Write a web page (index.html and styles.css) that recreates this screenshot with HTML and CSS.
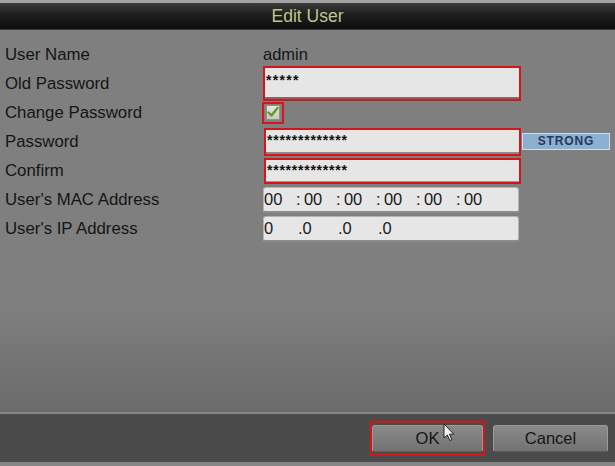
FILE: index.html
```html
<!DOCTYPE html>
<html>
<head>
<meta charset="utf-8">
<link rel="stylesheet" href="styles.css">
</head>
<body>
<div class="window">
  <div class="topstrip"></div>
  <div class="titlebar">Edit User</div>
  <div class="form">
    <div class="row"><div class="label">User Name</div><div class="value">admin</div></div>
    <div class="row"><div class="label">Old Password</div>
      <div class="value"><div class="hl"><div class="field f-old"><span class="pw">*****</span></div></div></div></div>
    <div class="row"><div class="label">Change Password</div>
      <div class="value"><div class="hl hl-check"><div class="checkbox">
        <svg width="12" height="12" viewBox="0 0 12 12"><path d="M1.5 6.5 L4.5 9.5 L10.5 2" fill="none" stroke="#5e9a2c" stroke-width="2.4" stroke-linecap="round" stroke-linejoin="round"/></svg>
      </div></div></div></div>
    <div class="row"><div class="label">Password</div>
      <div class="value shift"><div class="hl"><div class="field f-pw"><span class="pw pw-long">*************</span></div></div>
      <div class="strength">STRONG</div></div></div>
    <div class="row"><div class="label">Confirm</div>
      <div class="value shift"><div class="hl"><div class="field f-cf"><span class="pw pw-long">*************</span></div></div></div></div>
    <div class="row"><div class="label">User's MAC Address</div>
      <div class="value"><div class="field f-box">
        <span class="seg first">00</span><span class="seg">:&thinsp;00</span><span class="seg">:&thinsp;00</span><span class="seg">:&thinsp;00</span><span class="seg">:&thinsp;00</span><span class="seg">:&thinsp;00</span>
      </div></div></div>
    <div class="row"><div class="label">User's IP Address</div>
      <div class="value"><div class="field f-box">
        <span class="seg ipfirst">0</span><span class="seg">.0</span><span class="seg">.0</span><span class="seg">.0</span>
      </div></div></div>
  </div>
  <div class="separator"></div>
  <div class="footer">
    <div class="okwrap"><div class="btn">OK</div></div>
    <div class="btn">Cancel</div>
  </div>
  <div class="bottomstrip"></div>
  <svg class="cursor" width="12" height="19" viewBox="0 0 12 19"><path d="M1 1 L1 15 L4.3 12 L6.8 17.5 L8.9 16.6 L6.4 11.2 L10.8 11.2 Z" fill="#f2f2f2" stroke="#222" stroke-width="1" stroke-linejoin="round"/></svg>
</div>
</body>
</html>
```
FILE: styles.css
```css
* { box-sizing: border-box; }
html, body { margin: 0; padding: 0; }
body {
  width: 615px;
  height: 466px;
  overflow: hidden;
  font-family: "Liberation Sans", Arial, sans-serif;
  background: #808080;
}
.window {
  position: relative;
  width: 615px;
  height: 466px;
  display: flex;
  flex-direction: column;
}
.topstrip {
  height: 3px;
  background: #a2a2a2;
}
.titlebar {
  height: 27px;
  background: linear-gradient(#3c3c3c 0%, #1e1e1e 45%, #0e0e0e 100%);
  border-bottom: 1px solid #3a3a3a;
  color: #bcc78c;
  font-size: 17.5px;
  line-height: 26px;
  text-align: center;
}
.form {
  flex: 1;
  padding-top: 10px;
  background: linear-gradient(#7f7f7f 0px, #7f7f7f 275px, #6b6b6b 100%);
}
.row {
  height: 29px;
  display: flex;
  align-items: center;
}
.label {
  width: 262px;
  padding-left: 5px;
  font-size: 16.8px;
  color: #151515;
}
.value {
  display: flex;
  align-items: center;
  font-size: 16.5px;
  color: #151515;
  padding-left: 1px;
}
.value.shift { padding-left: 2px; }
.hl {
  border: 2px solid #d2161a;
}
.hl-check {
  padding: 1px 2px 2px 2px;
  margin-left: -1px;
}
.field {
  background: #e6e6e6;
  width: 254px;
  color: #111;
}
.f-old {
  height: 31px;
  border-bottom: 2px solid #6f6f6f;
}
.f-pw {
  width: 253px;
  height: 24px;
  border-bottom: 2px solid #8a8a8a;
}
.f-cf {
  width: 253px;
  height: 22px;
  border-bottom: 1px solid #9a9a9a;
}
.pw {
  display: block;
  font-weight: bold;
  font-size: 14px;
  line-height: 14px;
  padding-left: 1px;
  padding-top: 5px;
  letter-spacing: 1.3px;
}
.pw-long {
  padding-top: 3px;
  letter-spacing: 0.75px;
}
.checkbox {
  width: 14px;
  height: 15px;
  background: linear-gradient(#e4e8d8, #c6ccb6);
  border: 1px solid #8e8e8e;
  display: flex;
  align-items: center;
  justify-content: center;
}
.strength {
  margin-left: 1px;
  width: 88px;
  height: 17px;
  background: #8cb0d2;
  border: 1px solid #cfdeec;
  color: #24385a;
  font-weight: bold;
  font-size: 12px;
  letter-spacing: 0.9px;
  line-height: 15px;
  text-align: center;
}
.f-box {
  width: 256px;
  height: 26px;
  border: 1px solid #b4b4b4;
  border-bottom: 2px solid #8c8c8c;
  border-radius: 3px;
  display: flex;
  align-items: center;
  font-size: 16.5px;
  color: #1a1a1a;
}
.seg {
  width: 40px;
  white-space: nowrap;
}
.seg.first { width: 32px; }
.seg.ipfirst { width: 34px; }
.separator {
  height: 2px;
  background: #858585;
}
.footer {
  height: 48px;
  background: #4b4b4b;
  display: flex;
  justify-content: flex-end;
  align-items: center;
  gap: 8px;
  padding-right: 7px;
}
.okwrap {
  border: 2px solid #d2161a;
  padding: 2px 0;
}
.btn {
  width: 115px;
  height: 27px;
  border-radius: 3px;
  background: linear-gradient(#8a8a8a, #727272);
  border: 1px solid #9a9a9a;
  border-bottom-color: #5c5c5c;
  font-size: 16.5px;
  color: #161616;
  text-align: center;
  line-height: 25px;
}
.okwrap .btn {
  width: 111px;
}
.bottomstrip {
  height: 4px;
  background: #868686;
}
.cursor {
  position: absolute;
  left: 443px;
  top: 423px;
}
```
